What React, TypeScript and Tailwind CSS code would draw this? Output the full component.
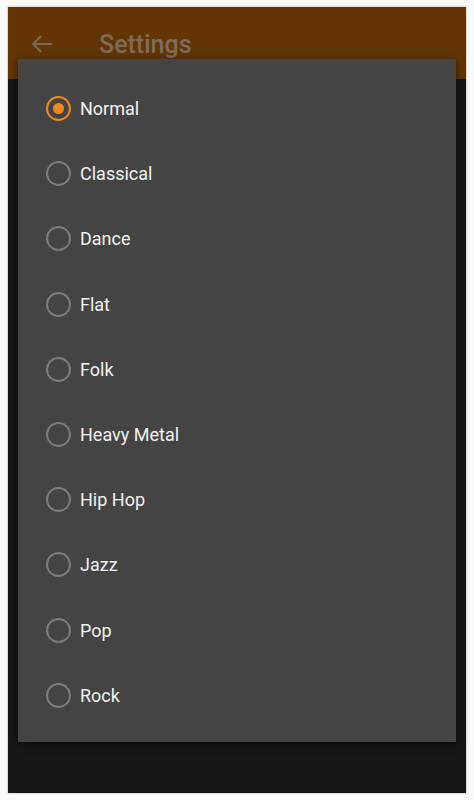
import { useState } from "react";

const presets = [
  "Normal",
  "Classical",
  "Dance",
  "Flat",
  "Folk",
  "Heavy Metal",
  "Hip Hop",
  "Jazz",
  "Pop",
  "Rock",
];

function Radio({ checked }: { checked: boolean }) {
  return (
    <span
      className={`flex h-[25px] w-[25px] shrink-0 items-center justify-center rounded-full border-[2.5px] ${
        checked ? "border-[#f08a1c]" : "border-[#7c7c7c]"
      }`}
    >
      {checked && <span className="h-[11px] w-[11px] rounded-full bg-[#f08a1c]" />}
    </span>
  );
}

export default function App() {
  const [selected, setSelected] = useState("Normal");

  return (
    <div
      className="h-[800px] w-[474px] bg-[#fafafa] pl-[8px] pt-[7px]"
      style={{ fontFamily: "Roboto, 'Noto Sans', sans-serif" }}
    >
      <div className="relative h-[786px] w-[458px] bg-[#161616] shadow-[0_0_2px_rgba(0,0,0,0.35)]">
        {/* dimmed app bar */}
        <div className="flex h-[72px] items-center bg-[#633503] pt-[2px]">
          <svg
            width="24"
            height="24"
            viewBox="0 0 24 24"
            className="ml-[22px] text-[#7e6c5a]"
            fill="none"
            stroke="currentColor"
            strokeWidth="1.8"
          >
            <path d="M22 12H3M11 4l-8 8 8 8" />
          </svg>
          <span className="ml-[45px] text-[25px] font-medium leading-none text-[#7e6c5a]">Settings</span>
        </div>

        {/* dialog */}
        <div className="absolute left-[10px] top-[52px] w-[438px] bg-[#444444] pb-[14px] pt-[17px] shadow-[0_2px_8px_rgba(0,0,0,0.5)]">
          {presets.map(name => (
            <button
              key={name}
              onClick={() => setSelected(name)}
              className="flex h-[65.2px] w-full items-center gap-[9px] pl-[28px] text-left"
            >
              <Radio checked={selected === name} />
              <span className="text-[18px] text-[#f2f2f2]">{name}</span>
            </button>
          ))}
        </div>
      </div>
    </div>
  );
}
